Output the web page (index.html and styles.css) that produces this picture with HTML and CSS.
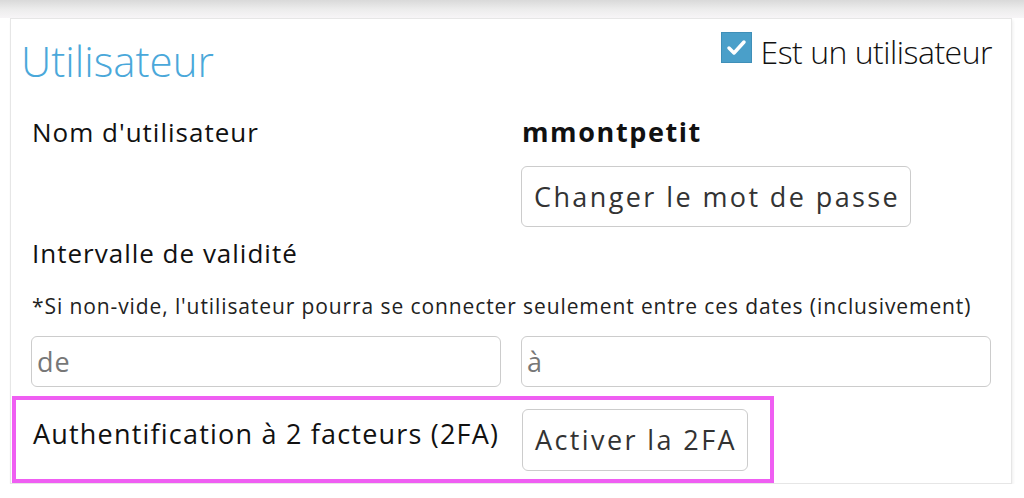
FILE: index.html
```html
<!DOCTYPE html>
<html lang="fr">
<head>
    <meta charset="UTF-8">
    <title>Utilisateur</title>
    <link rel="stylesheet" href="styles.css">
</head>
<body>

<div class="top-strip"></div>

<div class="card">
    <!-- Header -->
    <div class="card-header">
        <h2>Utilisateur</h2>
        <label class="check">
            <svg class="check-box" width="31" height="31" viewBox="0 0 31 31">
                <rect x="0.5" y="0.5" width="30" height="30" fill="#4a9fc9" stroke="#3f8fb8"/>
                <path d="M8 16 L13 21 L23 10" fill="none" stroke="#fff" stroke-width="3.5" stroke-linecap="round" stroke-linejoin="round"/>
            </svg>
            <span>Est un utilisateur</span>
        </label>
    </div>

    <!-- Username -->
    <div class="row">
        <div class="label">Nom d'utilisateur</div>
        <div class="username">mmontpetit</div>
    </div>
    <div class="row">
        <div></div>
        <div><button class="btn btn-pass">Changer le mot de passe</button></div>
    </div>

    <!-- Validity -->
    <div class="label label-wide">Intervalle de validité</div>
    <div class="note">*Si non-vide, l'utilisateur pourra se connecter seulement entre ces dates (inclusivement)</div>
    <div class="row row-inputs">
        <input type="text" placeholder="de">
        <input type="text" placeholder="à">
    </div>

    <!-- 2FA -->
    <div class="highlight">
        <div class="label label-2fa">Authentification à 2 facteurs (2FA)</div>
        <button class="btn btn-2fa">Activer la 2FA</button>
    </div>
</div>

</body>
</html>
```

FILE: styles.css
```css
body {
    margin: 0;
    font-family: "Open Sans", sans-serif;
    color: #111;
    background-color: #fff;
}
.top-strip {
    height: 18px;
    background: linear-gradient(#d9d9d9, #ececec 50%, #f7f5f7);
}
.card {
    margin-left: 10px;
    width: 1002px;
    box-sizing: border-box;
    border: 1px solid #e6e6e6;
    box-shadow: 1px 2px 3px rgba(0,0,0,0.07);
    padding: 0 20px;
    height: 466px;
}
.card-header {
    display: flex;
    justify-content: space-between;
    align-items: flex-start;
    height: 98px;
}
h2 {
    margin: 17px 0 0 -10px;
    font-size: 42px;
    line-height: 50px;
    font-weight: 300;
    color: #4aa8da;
}
.check {
    display: flex;
    align-items: flex-start;
    gap: 9px;
    margin-top: 13px;
    margin-right: -1px;
    font-size: 32px;
    line-height: 40px;
    font-weight: 300;
    letter-spacing: -0.5px;
}
.row {
    display: grid;
    grid-template-columns: 470px 470px;
    column-gap: 20px;
}
.label {
    font-size: 26px;
    line-height: 30px;
    letter-spacing: 1px;
    padding-left: 1px;
}
.username {
    font-size: 27px;
    line-height: 30px;
    font-weight: 700;
    letter-spacing: 1.6px;
    padding-left: 1px;
}
.btn {
    font-family: "Open Sans", sans-serif;
    font-size: 27px;
    letter-spacing: 2.4px;
    color: #333;
    background: #fff;
    border: 1px solid #ccc;
    border-radius: 6px;
    padding: 0 10px 0 12px;
    box-sizing: border-box;
}
.btn-pass {
    margin-top: 19px;
    height: 61px;
}
.label-wide {
    margin-top: 11px;
}
.note {
    margin-top: 25px;
    font-size: 21px;
    line-height: 26px;
    letter-spacing: 0.9px;
    color: #222;
    padding-left: 1px;
}
.row-inputs {
    margin-top: 17px;
}
input {
    height: 51px;
    box-sizing: border-box;
    border: 1px solid #ccc;
    border-radius: 6px;
    padding: 0 5px;
    font-family: "Open Sans", sans-serif;
    font-size: 27px;
    letter-spacing: 1px;
}
input::placeholder {
    color: #777;
}
.highlight {
    display: flex;
    align-items: center;
    margin: 9px 0 0 -19px;
    width: 762px;
    height: 87px;
    box-sizing: border-box;
    border: 4px solid #ef5ef2;
    padding-left: 16px;
}
.label-2fa {
    width: 489px;
    flex-shrink: 0;
    margin-top: -12px;
    font-size: 27px;
    letter-spacing: 1.2px;
}
.btn-2fa {
    height: 62px;
}
```
